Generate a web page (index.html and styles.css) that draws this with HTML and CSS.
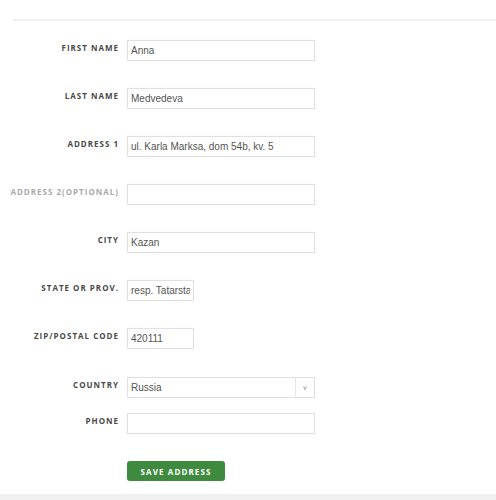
FILE: index.html
```html
<!DOCTYPE html>
<html lang="en">
<head>
  <meta charset="UTF-8">
  <meta name="viewport" content="width=device-width, initial-scale=1.0">
  <title>Edit Address</title>
  <link rel="stylesheet" href="styles.css">
</head>
<body>
  <div class="panel">
    <form class="address-form">
      <div class="row">
        <label for="firstName">First name</label>
        <input type="text" id="firstName" value="Anna">
      </div>
      <div class="row">
        <label for="lastName">Last name</label>
        <input type="text" id="lastName" value="Medvedeva">
      </div>
      <div class="row">
        <label for="address1">Address 1</label>
        <input type="text" id="address1" value="ul. Karla Marksa, dom 54b, kv. 5">
      </div>
      <div class="row">
        <label for="address2" class="optional">Address 2(optional)</label>
        <input type="text" id="address2">
      </div>
      <div class="row">
        <label for="city">City</label>
        <input type="text" id="city" value="Kazan">
      </div>
      <div class="row">
        <label for="state">State or prov.</label>
        <input type="text" id="state" class="short" value="resp. Tatarstan">
      </div>
      <div class="row row-country">
        <label for="zip">Zip/postal code</label>
        <input type="text" id="zip" class="short" value="420111">
      </div>
      <div class="row row-tight">
        <label for="country">Country</label>
        <div class="select-wrap">
          <select id="country">
            <option>Russia</option>
          </select>
          <span class="select-arrow">v</span>
        </div>
      </div>
      <div class="row">
        <label for="phone">Phone</label>
        <input type="text" id="phone">
      </div>
      <div class="row row-last">
        <span></span>
        <button type="submit" class="save-button">Save address</button>
      </div>
    </form>
  </div>
  <div class="footer-band"></div>
</body>
</html>
```

FILE: styles.css
```css
body {
  margin: 0;
  background: #fff;
  font-family: 'Liberation Sans', Arial, sans-serif;
}
.panel {
  margin: 19px 0 0 13px;
  border-top: 2px solid #f0f0f0;
  padding-top: 19px;
  height: 475px;
  box-sizing: border-box;
}
.row {
  display: grid;
  grid-template-columns: 106px 188px;
  column-gap: 8px;
  align-items: start;
  margin-bottom: 27px;
}
.row-country {
  margin-bottom: 28px;
}
.row-tight {
  margin-bottom: 15px;
}
.row-last {
  margin-bottom: 0;
}
.row label {
  display: flex;
  justify-content: flex-end;
  font-family: 'Open Sans', sans-serif;
  font-weight: 700;
  font-size: 8px;
  letter-spacing: 1px;
  text-transform: uppercase;
  color: #4a4a4a;
  white-space: nowrap;
  padding-top: 3px;
  line-height: 10px;
}
.row label.optional {
  color: #aaa;
}
.row input {
  width: 188px;
  height: 21px;
  box-sizing: border-box;
  border: 1px solid #e0e0e0;
  box-shadow: 0 0 2px rgba(0, 0, 0, 0.04);
  padding: 0 3px;
  font-family: 'Liberation Sans', Arial, sans-serif;
  font-size: 10px;
  color: #555;
  margin: 0;
}
.row input.short {
  width: 67px;
}
.select-wrap {
  position: relative;
  width: 188px;
}
.select-wrap select {
  appearance: none;
  -webkit-appearance: none;
  width: 188px;
  height: 21px;
  box-sizing: border-box;
  border: 1px solid #e0e0e0;
  border-radius: 0;
  background: #fff;
  padding: 0 3px;
  font-family: 'Liberation Sans', Arial, sans-serif;
  font-size: 10px;
  color: #555;
  margin: 0;
  display: block;
}
.select-arrow {
  position: absolute;
  top: 1px;
  right: 1px;
  width: 18px;
  height: 19px;
  border-left: 1px solid #e6e6e6;
  color: #888;
  font-family: 'Liberation Sans', Arial, sans-serif;
  font-size: 7px;
  line-height: 19px;
  text-align: center;
  pointer-events: none;
}
.save-button {
  width: 98px;
  height: 20px;
  background: #3e8a3e;
  color: #fff;
  border: none;
  border-radius: 3px;
  font-family: 'Open Sans', sans-serif;
  font-weight: 700;
  font-size: 8px;
  letter-spacing: 1.1px;
  text-transform: uppercase;
  padding: 0;
  cursor: pointer;
}
.footer-band {
  height: 6px;
  background: #f0f0f0;
}
```
